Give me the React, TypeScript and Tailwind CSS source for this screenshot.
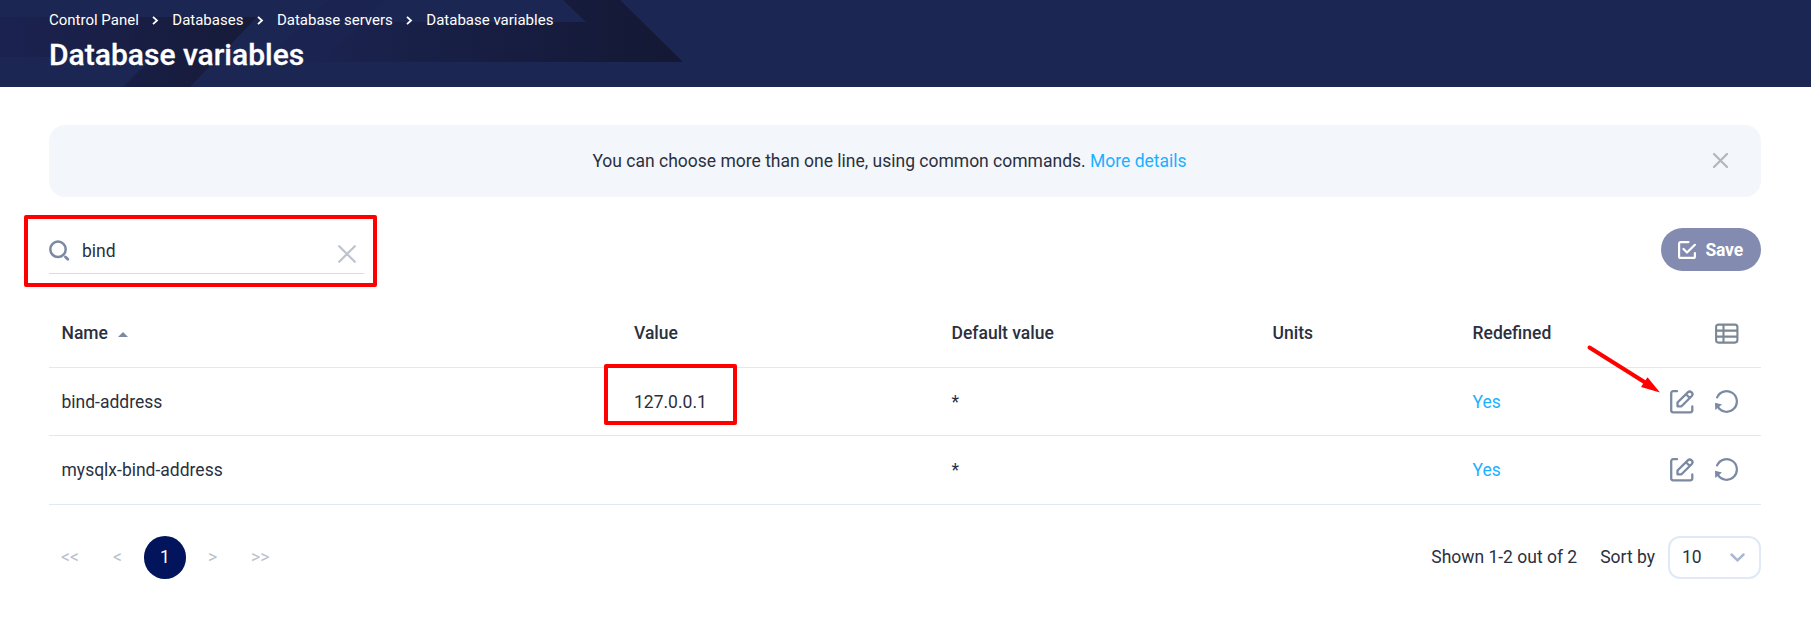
import React from "react";

const rows = [
  { name: "bind-address", value: "127.0.0.1" },
  { name: "mysqlx-bind-address", value: "" },
];

const crumbs = ["Control Panel", "Databases", "Database servers", "Database variables"];

function HeaderShapes() {
  return (
    <svg className="absolute left-0 top-0" width="700" height="87" viewBox="0 0 700 87">
      <defs>
        <linearGradient id="leftBand" gradientUnits="userSpaceOnUse" x1="0" y1="0" x2="250" y2="0">
          <stop offset="0" stopColor="#1b2250" />
          <stop offset="1" stopColor="#161b39" />
        </linearGradient>
        <linearGradient id="rightBand" gradientUnits="userSpaceOnUse" x1="290" y1="0" x2="682" y2="0">
          <stop offset="0" stopColor="#1b2451" />
          <stop offset="1" stopColor="#141834" />
        </linearGradient>
      </defs>
      <path d="M328 0H385L322 62H264Z" fill="#1b2450" />
      <path d="M0 17H257L190 87H123L153 57H0Z" fill="url(#leftBand)" />
      <path d="M363 22H586L563 0H620L683 62H322Z" fill="url(#rightBand)" />
    </svg>
  );
}

function CrumbChevron() {
  return (
    <svg width="7" height="9" viewBox="0 0 7 9" fill="none" stroke="#fff" strokeWidth="1.8">
      <path d="M1 .8 5 4.500 1 8.200" />
    </svg>
  );
}

function Close({ size, color, width }: { size: number; color: string; width: number }) {
  return (
    <svg width={size} height={size} viewBox="0 0 18 18" fill="none" stroke={color} strokeWidth={width} strokeLinecap="round">
      <path d="M1.200 1.200 16.800 16.800M16.800 1.200 1.200 16.800" />
    </svg>
  );
}

function EditIcon() {
  return (
    <svg width="24" height="24" viewBox="0 0 24 24" fill="none" stroke="#7b89a3" strokeWidth="2.300" strokeLinecap="round" strokeLinejoin="round">
      <path d="M7 1.200H3.200A2 2 0 0 0 1.200 3.200V20.300A2 2 0 0 0 3.200 22.300H20.300A2 2 0 0 0 22.300 20.300V16.500" />
      <path d="M7.500 12.500 17.800 2.400A2.500 2.500 0 0 1 21.600 6.200L11.500 16.300H7.500ZM16 4.200 19.800 8" />
    </svg>
  );
}

function ResetIcon() {
  return (
    <svg width="24" height="24" viewBox="0 0 24 24" fill="none" stroke="#7b89a3" strokeWidth="2.200" strokeLinecap="round">
      <path d="M2.100 7.400A10.300 10.300 0 1 1 3 17.200" />
      <path d="M0 12.800 7 14.500 .3 20Z" fill="#7b89a3" stroke="none" />
    </svg>
  );
}

function TableIcon() {
  return (
    <svg className="mt-0.5" width="24" height="24" viewBox="0 0 24 24" fill="none" stroke="#7b8794" strokeWidth="2.100">
      <rect x="1.100" y="2.600" width="21.300" height="18" rx="2.500" />
      <path d="M8.500 2.500V20.500M1.500 8.600H22.500M1.500 14.600H22.500" />
    </svg>
  );
}

const grid = "grid grid-cols-[572.5px_317.500px_321px_200px_1fr] items-center border-b border-[#e1e8f1] pl-[12.5px]";

export default function App() {
  return (
    <div className="relative h-[634px] w-[1811px] overflow-hidden bg-white font-['Roboto',sans-serif] text-[17.5px] leading-6 text-[#2b3040]">
      <header className="relative h-[87px] bg-[#1c2653] pl-[49px] text-white">
        <HeaderShapes />
        <nav className="relative flex h-10 items-center text-[15px]">
          {crumbs.map((c, i) => (
            <React.Fragment key={c}>
              {i > 0 && (
                <span className="pl-[13.5px] pr-[13px] pt-px">
                  <CrumbChevron />
                </span>
              )}
              <span>{c}</span>
            </React.Fragment>
          ))}
        </nav>
        <h1 className="relative pt-px text-[30px] font-medium leading-7 [-webkit-text-stroke:0.3px_#fff]">Database variables</h1>
      </header>

      <main className="px-[49px] pt-[38px]">
        <section className="flex h-[72px] w-[1712px] items-center rounded-2xl bg-[#f3f6fb] pl-[17px] pr-[33px]">
          <p className="flex-1 text-center">
            You can choose more than one line, using common commands. <a className="text-[#1db0ff]">More details</a>
          </p>
          <span className="-mt-px">
            <Close size={15} color="#b0b7bf" width={2.6} />
          </span>
        </section>

        <section className="mt-[31px] flex h-[46px] w-[1712px] items-start justify-between">
          <div className="flex h-[46px] w-[315px] items-center border-b border-[#d5dce6]">
            <svg width="21" height="21" viewBox="0 0 21 21" fill="none" stroke="#7b89a3" strokeWidth="2.500" strokeLinecap="round">
              <circle cx="9" cy="9.300" r="7.700" />
              <path d="M16.500 17 18.800 19.300" strokeWidth="2.800" />
            </svg>
            <span className="flex-1 pl-3">bind</span>
            <span className="mr-2 pt-[7px]">
              <Close size={18} color="#bcc4ce" width={2.2} />
            </span>
          </div>
          <button className="flex h-[43px] w-[100px] items-center rounded-full bg-[#838bb0] pl-[17px] font-bold text-white">
            <svg width="18" height="18" viewBox="0 0 18 18" fill="none" stroke="#fff" strokeWidth="2.200" strokeLinecap="round" strokeLinejoin="round">
              <path d="M10.500 1.100H2.600A1.500 1.500 0 0 0 1.100 2.600V15.400A1.500 1.500 0 0 0 2.600 16.900H15.400A1.500 1.500 0 0 0 16.900 15.400V12" />
              <path d="M5.500 8 9 11.500 16.900 3.800" />
            </svg>
            <span className="pl-[9.5px] tracking-[-0.2px]">Save</span>
          </button>
        </section>

        <section className="mt-6 w-[1712px]">
          <div className={`${grid} h-[70px] font-medium`}>
            <span className="flex items-center gap-[10.5px]">
              Name
              <svg className="mt-1" width="10" height="5" viewBox="0 0 10 5" fill="#7b89a3">
                <path d="M0 5 5 0 10 5Z" />
              </svg>
            </span>
            <span>Value</span>
            <span>Default value</span>
            <span>Units</span>
            <span className="flex items-center justify-between pr-[22.500px]">
              Redefined
              <TableIcon />
            </span>
          </div>
          {rows.map((r) => (
            <div key={r.name} className={`${grid} h-[68px] last:h-[69px]`}>
              <span>{r.name}</span>
              <span>{r.value}</span>
              <span>*</span>
              <span />
              <span className="flex items-center justify-between pr-[22.500px]">
                <a className="text-[#1db0ff]">Yes</a>
                <span className="flex gap-[21px]">
                  <EditIcon />
                  <ResetIcon />
                </span>
              </span>
            </div>
          ))}
        </section>

        <footer className="mt-[31px] flex h-[43px] w-[1712px] items-center justify-between">
          <div className="flex items-center pl-3 text-[#bcc0cc]">
            <span className="w-[52px] pb-px">&lt;&lt;</span>
            <span className="w-[31px] pb-px">&lt;</span>
            <span className="flex h-[43px] w-[42px] items-center justify-center rounded-full bg-[#02145c] pb-0.5 text-white">1</span>
            <span className="w-[43px] pb-px pl-[22px]">&gt;</span>
            <span className="pb-px pl-[22px]">&gt;&gt;</span>
          </div>
          <div className="flex items-center">
            <span className="pb-0.5">Shown 1-2 out of 2</span>
            <span className="pb-0.5 pl-[23px] pr-[13px]">Sort by</span>
            <div className="flex h-[43px] w-[93px] items-center justify-between rounded-[12px] border-2 border-[#e0e9f6] pl-3 pr-[14px]">
              <span className="pb-0.5">10</span>
              <svg width="15" height="9" viewBox="0 0 15 9" fill="none" stroke="#a9b7d3" strokeWidth="2.500" strokeLinecap="round">
                <path d="M1.500 1.500 7.500 7.300 13.500 1.500" />
              </svg>
            </div>
          </div>
        </footer>
      </main>

      <div className="absolute left-[24px] top-[215px] h-[72px] w-[353px] rounded-[2px] border-[4px] border-[#ff0000]" />
      <div className="absolute left-[604px] top-[364px] h-[61px] w-[133px] rounded-[2px] border-[4px] border-[#ff0000]" />
      <svg className="absolute left-[1584px] top-[342px]" width="80" height="54" viewBox="0 0 80 54">
        <path d="M5.500 5.500 62 41" stroke="#f00" strokeWidth="4" strokeLinecap="round" />
        <path d="M76 50.500 57 45 63.500 35.300Z" fill="#f00" />
      </svg>
    </div>
  );
}
